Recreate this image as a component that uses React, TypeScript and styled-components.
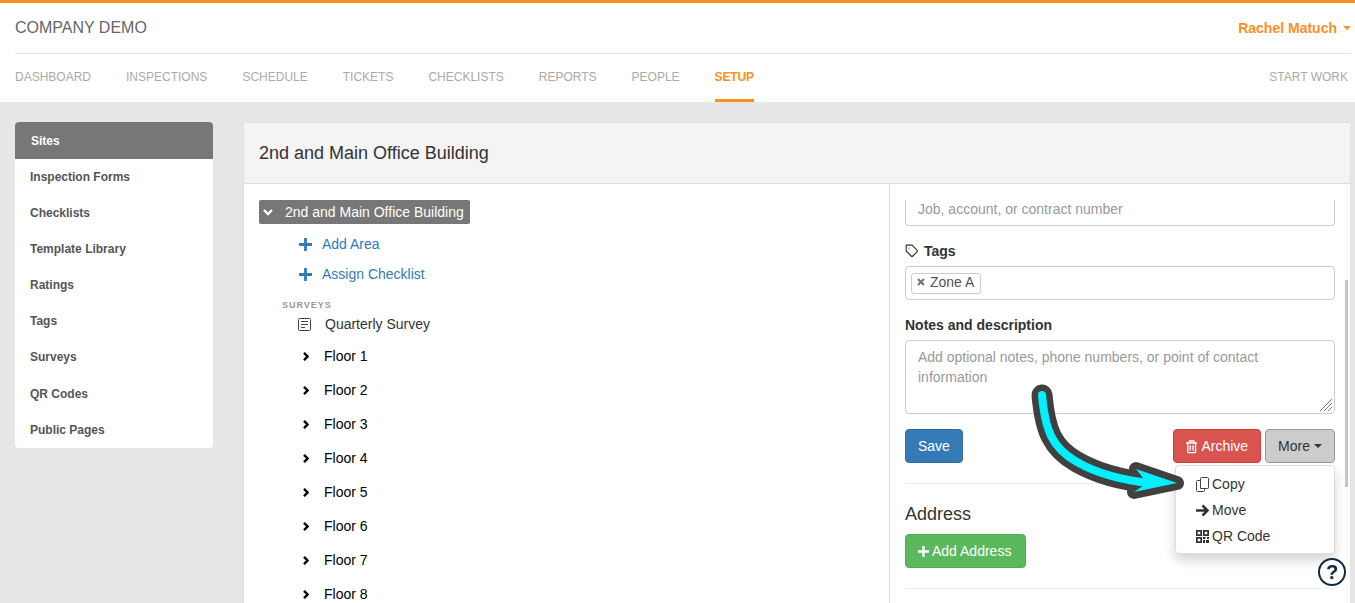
import React from "react";
import styled, { createGlobalStyle } from "styled-components";
import { FiTag } from "react-icons/fi";

const Global = createGlobalStyle`
  html, body { margin: 0; padding: 0; height: 603px; overflow: hidden; background: #e7e7e7; }
  body { font-family: "Liberation Sans", Arial, sans-serif; font-size: 14px; color: #333; }
  * { box-sizing: border-box; }
`;

const Page = styled.div`
  position: relative;
  width: 1355px;
  height: 603px;
  overflow: hidden;
  background: #e7e7e7;
`;
const Header = styled.header`
  height: 102px;
  background: #fff;
  border-top: 3px solid #fd8f1f;
  padding: 0 4px 0 15px;
`;
const TopRow = styled.div`
  height: 51px;
  border-bottom: 1px solid #e0e0e0;
  display: flex;
  align-items: center;
  justify-content: space-between;
`;
const Brand = styled.div`
  font-size: 16px;
  color: #666;
`;
const User = styled.div`
  font-size: 14px;
  font-weight: bold;
  color: #fd8f1f;
  display: flex;
  align-items: center;
  gap: 6px;
`;
const Caret = styled.span`
  display: inline-block;
  width: 0;
  height: 0;
  border-top: 4px solid currentColor;
  border-left: 4px solid transparent;
  border-right: 4px solid transparent;
`;
const NavRow = styled.nav`
  display: flex;
  height: 48px;
  gap: 35px;
  align-items: stretch;
  padding-right: 3px;
`;
const NavItem = styled.a<{ $active?: boolean; $right?: boolean }>`
  font-size: 12px;
  display: flex;
  align-items: center;
  color: ${(p) => (p.$active ? "#fd8f1f" : "#aaa")};
  font-weight: ${(p) => (p.$active ? "bold" : "normal")};
  letter-spacing: ${(p) => (p.$active ? "-0.15px" : "0")};
  border-bottom: 3px solid ${(p) => (p.$active ? "#fd8f1f" : "transparent")};
  padding-top: 1px;
  margin-left: ${(p) => (p.$right ? "auto" : "0")};
`;
const Body = styled.div`
  display: flex;
  align-items: flex-start;
  padding: 20px 4px 0 15px;
  gap: 30px;
`;
const Side = styled.ul`
  list-style: none;
  margin: 0;
  padding: 0;
  width: 198px;
  height: 326px;
  flex: none;
  background: #fff;
  border-radius: 4px;
  overflow: hidden;
`;
const SideItem = styled.li<{ $active?: boolean }>`
  height: ${(p) => (p.$active ? "37px" : "36.09px")};
  display: flex;
  align-items: center;
  padding-left: ${(p) => (p.$active ? "16px" : "15px")};
  font-size: 12px;
  font-weight: bold;
  color: ${(p) => (p.$active ? "#fff" : "#555")};
  background: ${(p) => (p.$active ? "#777" : "transparent")};
`;
const Panel = styled.section`
  flex: 1;
  height: 520px;
  background: #fff;
  border: 1px solid #e0e0e0;
  border-radius: 4px 4px 0 0;
`;
const PanelHead = styled.div`
  height: 61px;
  background: #f4f4f4;
  border-bottom: 1px solid #ddd;
  display: flex;
  align-items: center;
  padding-left: 15px;
  font-size: 18px;
  color: #333;
`;
const Columns = styled.div`
  display: flex;
  height: 458px;
`;
const TreeCol = styled.div`
  width: 646px;
  flex: none;
  border-right: 1px solid #ddd;
  padding: 16px 0 0 15px;
  overflow: hidden;
`;
const RootNode = styled.div`
  display: inline-flex;
  align-items: center;
  height: 24px;
  width: 211px;
  background: #777;
  color: #fff;
  border-radius: 2px;
  padding-left: 4px;
  gap: 12px;
`;
const ActionRow = styled.a<{ $first?: boolean }>`
  display: flex;
  align-items: center;
  height: 30px;
  margin-top: ${(p) => (p.$first ? "5px" : "0")};
  padding-left: 40px;
  gap: 10px;
  color: #337ab7;
`;
const SectionLabel = styled.div`
  font-size: 9px;
  font-weight: bold;
  letter-spacing: 1px;
  color: #999;
  padding-left: 23px;
  margin-top: 11px;
  height: 11px;
  line-height: 11px;
`;
const SurveyRow = styled.div`
  display: flex;
  align-items: center;
  height: 24px;
  margin: 1px 0 3px;
  padding-left: 39px;
  gap: 14px;
  color: #333;
`;
const FloorRow = styled.div`
  display: flex;
  align-items: center;
  height: 34px;
  padding-left: 44px;
  gap: 15px;
  color: #000;
  svg { flex: none; }
`;
const FormCol = styled.div`
  flex: 1;
  position: relative;
  padding: 0 15px;
  overflow: hidden;
`;
const JobInput = styled.div`
  height: 26px;
  margin-top: 16px;
  border: 1px solid #ccc;
  border-top: none;
  border-radius: 0 0 4px 4px;
  color: #999;
  padding: 0 12px;
  line-height: 19px;
`;
const Label = styled.div`
  margin-top: 15px;
  height: 20px;
  font-weight: bold;
  display: flex;
  align-items: center;
  gap: 5px;
`;
const TagBox = styled.div`
  margin-top: 5px;
  height: 34px;
  border: 1px solid #ccc;
  border-radius: 4px;
  padding: 0 5px;
  display: flex;
  align-items: center;
`;
const Chip = styled.span`
  display: inline-flex;
  align-items: center;
  height: 21px;
  width: 70px;
  padding: 0 0 2px 5px;
  gap: 5px;
  border: 1px solid #ccc;
  border-radius: 3px;
  color: #555;
`;
const NotesBox = styled.div`
  position: relative;
  margin-top: 5px;
  height: 74px;
  border: 1px solid #ccc;
  border-radius: 4px;
  padding: 6px 12px;
  line-height: 20px;
  color: #999;
`;
const Grip = styled.svg`
  position: absolute;
  right: 1px;
  bottom: 1px;
`;
const ButtonRow = styled.div`
  display: flex;
  margin-top: 15px;
  gap: 4px;
`;
const Btn = styled.button<{ $bg: string; $bd: string; $fg?: string; $w?: number; $gap?: number }>`
  font: inherit;
  height: 34px;
  width: ${(p) => (p.$w ? `${p.$w}px` : "auto")};
  padding: 0 12px;
  border-radius: 4px;
  border: 1px solid ${(p) => p.$bd};
  background: ${(p) => p.$bg};
  color: ${(p) => p.$fg || "#fff"};
  display: inline-flex;
  align-items: center;
  gap: ${(p) => p.$gap ?? 4}px;
  white-space: nowrap;
`;
const Spacer = styled.div`
  flex: 1;
`;
const Rule = styled.hr`
  border: none;
  border-top: 1px solid #eee;
  margin: 20px 0 0;
`;
const SectionTitle = styled.div`
  font-size: 18px;
  line-height: 20px;
  margin-top: 20px;
  margin-bottom: 10px;
`;
const ScrollThumb = styled.div`
  position: absolute;
  right: 2px;
  top: 96px;
  width: 3px;
  height: 207px;
  background: #c4c4c4;
`;
const Menu = styled.div`
  position: absolute;
  left: 1175px;
  top: 465px;
  width: 160px;
  height: 89px;
  background: #fff;
  border: 1px solid #ddd;
  border-radius: 4px;
  box-shadow: 0 6px 12px rgba(0, 0, 0, 0.175);
  padding: 5px 0;
`;
const MenuItem = styled.div`
  height: 26px;
  display: flex;
  align-items: center;
  padding-left: 20px;
  gap: 3px;
  color: #333;
  svg { flex: none; }
`;
const Overlay = styled.svg`
  position: absolute;
  left: 0;
  top: 0;
  pointer-events: none;
`;
const Help = styled.div`
  position: absolute;
  left: 1318px;
  top: 558px;
  width: 28px;
  height: 28px;
  border: 2px solid #0e2a47;
  border-radius: 50%;
  background: #fff;
  color: #0e2a47;
  font-size: 20px;
  font-weight: bold;
  display: flex;
  align-items: center;
  justify-content: center;
`;

const nav = ["DASHBOARD", "INSPECTIONS", "SCHEDULE", "TICKETS", "CHECKLISTS", "REPORTS", "PEOPLE"];
const side = ["Inspection Forms", "Checklists", "Template Library", "Ratings", "Tags", "Surveys", "QR Codes", "Public Pages"];
const floors = [1, 2, 3, 4, 5, 6, 7, 8];
const CURVE = "M1042 395C1045 430 1052 448 1077 462C1098 474 1120 480 1150 483";
const HEAD = "M1136 469L1177 483L1134 492L1147 483Z";

const SurveyIcon = () => (
  <svg width="13" height="13" viewBox="0 0 13 13" fill="none" stroke="#444" strokeWidth="1">
    <rect x="0.5" y="0.5" width="12" height="12" rx="1" />
    <path d="M3 3.5h7M3 6.5h7M3 9.5h4" />
  </svg>
);
const QrIcon = () => (
  <svg width="13" height="13" viewBox="0 0 13 13" fill="#333">
    <path fillRule="evenodd" d="M0 0h6v6H0zM1.7 1.7v2.6h2.6V1.7zM7 0h6v6H7zM8.7 1.7v2.6h2.6V1.7zM0 7h6v6H0zM1.7 8.7v2.6h2.6V8.7z" />
    <path d="M7 7h2.5v2H7zM11 7h2v2h-2zM7 10h2v3H7zM10 10h3v3h-3z" />
  </svg>
);
const ChevronRight = () => (
  <svg width="6" height="9" viewBox="0 0 6 9" fill="none" stroke="#000" strokeWidth="2.4">
    <path d="M1 0.8L4.6 4.5L1 8.2" />
  </svg>
);
const ChevronDown = () => (
  <svg width="10" height="7" viewBox="0 0 10 7" fill="none" stroke="#fff" strokeWidth="2.4">
    <path d="M1 1L5 5L9 1" />
  </svg>
);
const PlusIcon = ({ size }: { size: number }) => (
  <svg width={size} height={size} viewBox="0 0 12 12" fill="currentColor">
    <path d="M4.7 0h2.6v4.7H12v2.6H7.3V12H4.7V7.3H0V4.7h4.7z" />
  </svg>
);
const TrashIcon = () => (
  <svg width="13" height="15" viewBox="0 0 13 15" fill="none" stroke="#fff" strokeWidth="1.6">
    <path d="M0 3.5h13M4 3.5V1.2h5v2.3M2 3.5v10a1 1 0 0 0 1 1h7a1 1 0 0 0 1-1v-10M4.9 6v6M8.1 6v6" />
  </svg>
);
const CopyIcon = () => (
  <svg width="13" height="15" viewBox="0 0 13 15" fill="none" stroke="#444" strokeWidth="1">
    <path d="M4.5 11.5V1.5a1 1 0 0 1 1-1h6a1 1 0 0 1 1 1v9a1 1 0 0 1-1 1z" />
    <path d="M4.5 3.5h-3a1 1 0 0 0-1 1v9a1 1 0 0 0 1 1h6a1 1 0 0 0 1-1v-2" />
  </svg>
);
const ArrowIcon = () => (
  <svg width="13" height="13" viewBox="0 0 13 13" fill="none" stroke="#333" strokeWidth="2.6">
    <path d="M0 6.5h11M6.5 1.5l5 5-5 5" />
  </svg>
);
const CrossIcon = () => (
  <svg width="8" height="8" viewBox="0 0 8 8" fill="none" stroke="#777" strokeWidth="2.2">
    <path d="M1 1l6 6M7 1l-6 6" />
  </svg>
);

export default function App() {
  return (
    <Page>
      <Global />
      <Header>
        <TopRow>
          <Brand>COMPANY DEMO</Brand>
          <User>
            Rachel Matuch <Caret />
          </User>
        </TopRow>
        <NavRow>
          {nav.map((n) => (
            <NavItem key={n}>{n}</NavItem>
          ))}
          <NavItem $active>SETUP</NavItem>
          <NavItem $right>START WORK</NavItem>
        </NavRow>
      </Header>
      <Body>
        <Side>
          <SideItem $active>Sites</SideItem>
          {side.map((s) => (
            <SideItem key={s}>{s}</SideItem>
          ))}
        </Side>
        <Panel>
          <PanelHead>2nd and Main Office Building</PanelHead>
          <Columns>
            <TreeCol>
              <RootNode>
                <ChevronDown />
                2nd and Main Office Building
              </RootNode>
              <ActionRow $first>
                <PlusIcon size={13} />
                Add Area
              </ActionRow>
              <ActionRow>
                <PlusIcon size={13} />
                Assign Checklist
              </ActionRow>
              <SectionLabel>SURVEYS</SectionLabel>
              <SurveyRow>
                <SurveyIcon />
                Quarterly Survey
              </SurveyRow>
              {floors.map((f) => (
                <FloorRow key={f}>
                  <ChevronRight />
                  Floor {f}
                </FloorRow>
              ))}
            </TreeCol>
            <FormCol>
              <JobInput>Job, account, or contract number</JobInput>
              <Label>
                <FiTag size={14} />
                Tags
              </Label>
              <TagBox>
                <Chip>
                  <CrossIcon />
                  Zone A
                </Chip>
              </TagBox>
              <Label>Notes and description</Label>
              <NotesBox>
                Add optional notes, phone numbers, or point of contact information
                <Grip width="14" height="14" viewBox="0 0 14 14" stroke="#777" strokeWidth="1">
                  <path d="M1 13L13 1M5 13l8-8M9 13l4-4" />
                </Grip>
              </NotesBox>
              <ButtonRow>
                <Btn $bg="#337ab7" $bd="#2e6da4">Save</Btn>
                <Spacer />
                <Btn $bg="#d9534f" $bd="#d43f3a" $w={88}>
                  <TrashIcon />
                  Archive
                </Btn>
                <Btn $bg="#ccc" $bd="#999" $fg="#333">
                  More <Caret />
                </Btn>
              </ButtonRow>
              <Rule />
              <SectionTitle>Address</SectionTitle>
              <Btn $bg="#5cb85c" $bd="#4cae4c" $w={121} $gap={3}>
                <PlusIcon size={11} />
                Add Address
              </Btn>
              <Rule />
              <ScrollThumb />
            </FormCol>
          </Columns>
        </Panel>
      </Body>
      <Menu>
        <MenuItem>
          <CopyIcon />
          Copy
        </MenuItem>
        <MenuItem>
          <ArrowIcon />
          Move
        </MenuItem>
        <MenuItem>
          <QrIcon />
          QR Code
        </MenuItem>
      </Menu>
      <Overlay width="1355" height="603" viewBox="0 0 1355 603">
        <g fill="none" strokeLinecap="round" strokeLinejoin="round">
          <path d={CURVE} stroke="#404040" strokeWidth="21" />
          <path d={HEAD} stroke="#404040" strokeWidth="14" fill="#404040" />
          <path d={CURVE} stroke="#00f0ff" strokeWidth="8" />
          <path d={HEAD} fill="#00f0ff" stroke="none" />
        </g>
      </Overlay>
      <Help>?</Help>
    </Page>
  );
}
